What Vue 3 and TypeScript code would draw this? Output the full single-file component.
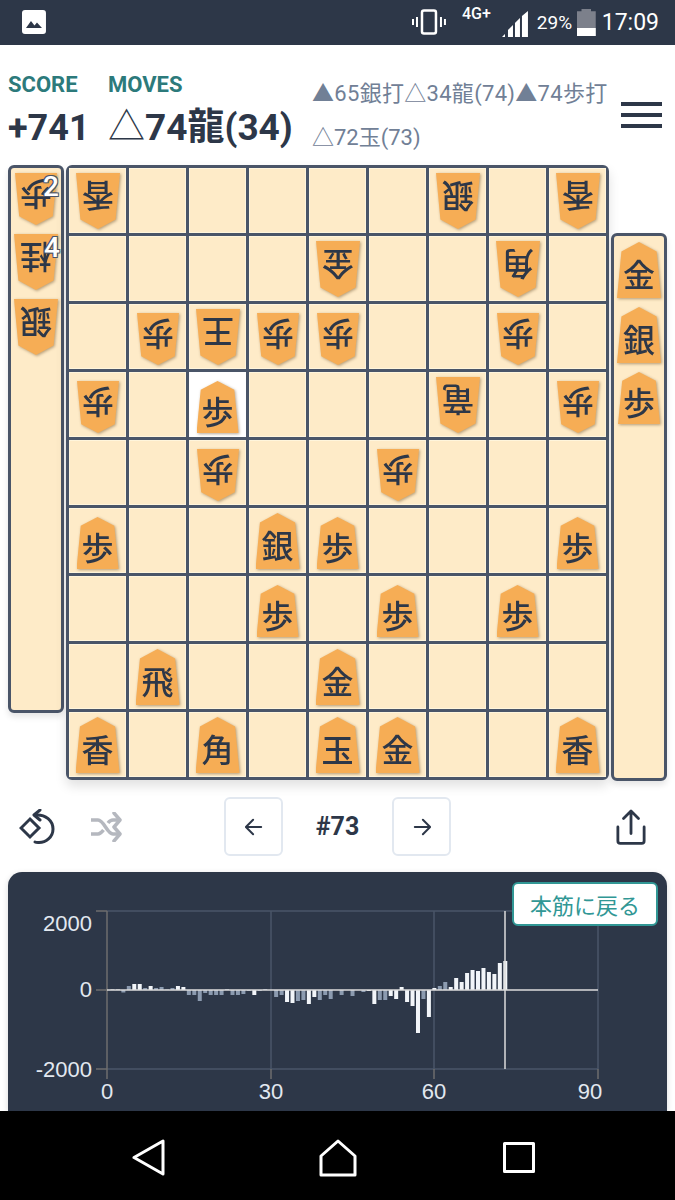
<template>
  <div class="page">
    <div class="status">
      <svg class="st-img" width="24" height="24" viewBox="0 0 24 24">
        <rect x="0" y="0" width="24" height="24" rx="3" fill="#fff" />
        <path d="M4 18l5-7 3.500 4.500 2.500-3 5 5.500z" fill="#2d3748" />
      </svg>
      <svg class="st-vib" width="34" height="26" viewBox="0 0 34 26">
        <rect x="10" y="1.500" width="14" height="23" rx="2" fill="none" stroke="#fff" stroke-width="2.500" />
        <path d="M5 8v10M1 10v6M29 8v10M33 10v6" stroke="#fff" stroke-width="2" />
      </svg>
      <span class="st-net">4G+</span>
      <svg class="st-sig" width="26" height="26" viewBox="0 0 26 26">
        <path d="M0 26l3-3v3zM6 26v-7l5-5v12zM13 26V12l5-5v19zM20 26V5l6-5v26z" fill="#fff" />
      </svg>
      <span class="st-pct">29%</span>
      <div class="st-bat"><i></i></div>
      <span class="st-time">17:09</span>
    </div>

    <header class="head">
      <div class="score">
        <div class="label">SCORE</div>
        <div class="big">+741</div>
      </div>
      <div class="moves">
        <div class="label">MOVES</div>
        <div class="big"><span class="tri">△</span>74龍(34)</div>
      </div>
      <div class="history">
        <div class="history-first">▲65銀打△34龍(74)▲74歩打</div>
        <div>△72玉(73)</div>
      </div>
      <div class="burger"><i></i><i></i><i></i></div>
    </header>

    <div class="table">
      <div class="stand stand-left">
        <div v-for="h in goteHand" :key="h.c" class="hand-piece">
          <div class="piece gote" :class="{ small: h.c === '歩' }"><div class="shape">{{ h.c }}</div></div>
          <span v-if="h.n" class="count">{{ h.n }}</span>
        </div>
      </div>
      <div class="board">
        <div v-for="(cell, i) in cells" :key="i" class="cell" :class="{ last: i === 29 }">
          <div v-if="cell" class="piece" :class="{ gote: cell.gote, small: cell.c === '歩' }">
            <div class="shape">{{ cell.c }}</div>
          </div>
        </div>
      </div>
      <div class="stand stand-right">
        <div v-for="h in senteHand" :key="h" class="hand-piece">
          <div class="piece" :class="{ small: h === '歩' }"><div class="shape">{{ h }}</div></div>
        </div>
      </div>
    </div>

    <div class="controls">
      <svg class="ic-flip" width="36" height="36" viewBox="0 0 36 36" fill="none" stroke="#2d3748" stroke-width="3">
        <path d="M11 10l9 9-9 9-9-9z" />
        <path d="M21 1l-6 5 6 5" stroke-linejoin="round" stroke-linecap="round" />
        <path d="M16 6c11-1 18 6 18 14 0 8-7 14-15 13.500-1 0-2 0-3-.5" stroke-linecap="round" />
      </svg>
      <svg class="ic-shuffle" width="32" height="30" viewBox="0 0 32 30" fill="none" stroke="#b5b8bf" stroke-width="3.500">
        <path d="M1 8h7c6 0 9 14 15 14h7M1 22h7c2 0 4-2 5.500-4M18 11c1.500-2 3-3 5-3h7" />
        <path d="M24 1l6 7-6 7M24 15l6 7-6 7" stroke-linejoin="round" stroke-linecap="round" />
      </svg>
      <button class="nav-btn" type="button">
        <svg width="18" height="18" viewBox="0 0 20 20" fill="none" stroke="#2d3748" stroke-width="2.200" stroke-linecap="round" stroke-linejoin="round">
          <path d="M18 10H2M9 2l-8 8 8 8" />
        </svg>
      </button>
      <div class="num">#73</div>
      <button class="nav-btn" type="button">
        <svg width="18" height="18" viewBox="0 0 20 20" fill="none" stroke="#2d3748" stroke-width="2.200" stroke-linecap="round" stroke-linejoin="round">
          <path d="M2 10h16M11 2l8 8-8 8" />
        </svg>
      </button>
      <svg class="ic-share" width="30" height="36" viewBox="0 0 32 38" fill="none" stroke="#2d3748" stroke-width="3" stroke-linecap="round" stroke-linejoin="round">
        <path d="M16 2v24M8 10l8-8 8 8" />
        <path d="M2 19v15c0 1.500 1 2.500 2.500 2.500h23c1.500 0 2.500-1 2.500-2.500V19" />
      </svg>
    </div>

    <section class="chart-panel">
      <svg class="chart" width="659" height="239" viewBox="0 0 659 239">
        <g stroke="#4a5568" stroke-width="1.500">
          <path d="M99 39H590M99 197H590M263 39V197M426 39V197M590 39V197" fill="none" />
        </g>
        <g stroke="#6e6e6e" stroke-width="1.500">
          <path d="M99 39V207M88 39H99M88 118H99M88 197H99M263 197V207M426 197V207M590 197V207" fill="none" />
        </g>
        <rect
          v-for="b in bars"
          :key="b.x"
          :x="b.x"
          :y="b.y"
          width="4"
          :height="b.h"
          :fill="b.fill"
        />
        <path d="M99 118H590M497 39V197" stroke="#dcdcdc" stroke-width="1.500" fill="none" />
        <g class="axis-text" text-anchor="end">
          <text x="84" y="59">2000</text>
          <text x="84" y="125">0</text>
          <text x="84" y="205">-2000</text>
        </g>
        <g class="axis-text" text-anchor="middle">
          <text x="99" y="227">0</text>
          <text x="263" y="227">30</text>
          <text x="426" y="227">60</text>
          <text x="582" y="227">90</text>
        </g>
      </svg>
      <button class="back-main" type="button">本筋に戻る</button>
    </section>

    <footer class="android">
      <svg width="33" height="37" viewBox="0 0 33 37" fill="none" stroke="#fff" stroke-width="3" stroke-linejoin="round">
        <path d="M2 18.500L31 2V35z" />
      </svg>
      <svg width="38" height="38" viewBox="0 0 38 38" fill="none" stroke="#fff" stroke-width="3" stroke-linejoin="round">
        <path d="M19 2L36 17V36H2V17z" />
      </svg>
      <svg class="nav-square" width="32" height="31" viewBox="0 0 32 31" fill="none" stroke="#fff" stroke-width="3" stroke-linejoin="round">
        <rect x="1.500" y="1.500" width="29" height="28" />
      </svg>
    </footer>
  </div>
</template>

<script setup lang="ts">
interface Cell {
  c: string;
  gote: boolean;
}

// "v" prefix = gote piece, "." = empty
const rows = [
  'v香 . . . . . v銀 . v香',
  '. . . . v金 . . v角 .',
  '. v歩 v王 v歩 v歩 . . v歩 .',
  'v歩 . 歩 . . . v竜 . v歩',
  '. . v歩 . . v歩 . . .',
  '歩 . . 銀 歩 . . . 歩',
  '. . . 歩 . 歩 . 歩 .',
  '. 飛 . . 金 . . . .',
  '香 . 角 . 玉 金 . . 香',
];

const cells: (Cell | null)[] = rows.flatMap((row) =>
  row.split(' ').map((t) => {
    if (t === '.') return null;
    return t[0] === 'v' ? { c: t.slice(1), gote: true } : { c: t, gote: false };
  }),
);

const goteHand = [
  { c: '歩', n: 2 },
  { c: '桂', n: 4 },
  { c: '銀', n: 0 },
];
const senteHand = ['金', '銀', '歩'];

// 評価値グラフ: 手数ごとの高さ(px)、true は白いバー
const evalPx: [number, boolean][] = [
  [0, true], [0.5, true], [0.5, true], [-2.5, false], [4, false], [6, true], [6, true], [2, false],
  [4, true], [2, false], [3, false], [0.5, false], [2, false], [4, true], [3, true], [-5, false],
  [-5, false], [-11, false], [-3, false], [-5, false], [-5, false], [-5, false], [1, false], [-5, false],
  [-5, false], [-4, false], [-1, false], [-5, true], [-1, false], [1, false], [0, false], [-7, false],
  [-5, false], [-12, true], [-13, true], [-11, false], [-10, false], [-14, true], [-7, true], [-10, false],
  [-5, false], [-9, false], [0, false], [-5, false], [0, false], [-6, false], [0, false], [-2, false],
  [-1, true], [-14, true], [-10, false], [-10, false], [-6, true], [-9, true], [3, true], [-12, true],
  [-16, true], [-43, true], [-9, false], [-27, true], [2, true], [4, false], [8, false], [3, true],
  [12, true], [8, true], [17, true], [20, true], [19, true], [22, true], [18, true], [16, true],
  [27, true], [29, true],
];

const bars = evalPx.map(([v, white], i) => ({
  x: 99 + 5.456 * i - 2,
  y: v > 0 ? 118 - v : 118,
  h: Math.abs(v),
  fill: white ? '#f2f5f9' : '#8c9bb0',
}));
</script>

<style scoped>
.page {
  width: 675px;
  height: 1200px;
  overflow: hidden;
  display: flex;
  flex-direction: column;
  font-family: Roboto, "Noto Sans CJK JP", sans-serif;
  color: #2d3748;
}

.status {
  height: 45px;
  flex: none;
  background: #2d3748;
  color: #fff;
  display: flex;
  align-items: center;
  padding: 0 16px 0 22px;
}
.st-img { margin-top: -2px; }
.st-vib { margin-left: 366px; margin-top: -1px; }
.st-net { margin-left: 16px; font-size: 16px; font-weight: 500; width: 34px; margin-top: -18px; }
.st-sig { margin-left: 6px; margin-top: 3px; }
.st-pct { margin-left: 9px; font-size: 19px; width: 40px; }
.st-bat {
  width: 19px;
  height: 27px;
  background: #7c808b;
  position: relative;
  clip-path: polygon(25% 0, 75% 0, 75% 8%, 100% 8%, 100% 100%, 0 100%, 0 8%, 25% 8%);
}
.st-bat i {
  position: absolute;
  left: 0;
  right: 0;
  bottom: 0;
  height: 8px;
  background: #fff;
}
.st-time { margin-left: 6px; font-size: 23px; }

.head {
  height: 120px;
  flex: none;
  display: flex;
  padding-left: 8px;
  box-sizing: border-box;
}
.score { width: 100px; padding-top: 27px; }
.moves { width: 204px; padding-top: 27px; }
.label {
  font-size: 22px;
  line-height: 26px;
  font-weight: 700;
  color: #2c7a7b;
}
.big {
  font-size: 36px;
  line-height: 46px;
  font-weight: 700;
  margin-top: 7px;
  white-space: nowrap;
}
.moves .big { font-size: 37px; }
.tri { font-weight: 400; }
.history {
  width: 300px;
  padding-top: 27px;
  font-size: 22px;
  line-height: 44px;
  color: #718096;
  white-space: nowrap;
}
.history-first { letter-spacing: 0.3px; }
.burger {
  margin-left: 9px;
  margin-top: 57px;
  width: 41px;
  display: flex;
  flex-direction: column;
  gap: 7px;
}
.burger i {
  height: 4px;
  background: #2d3748;
}

.table {
  flex: none;
  display: flex;
  align-items: flex-start;
  padding-left: 8px;
  gap: 2px;
}
.stand {
  width: 56px;
  box-sizing: border-box;
  height: 548px;
  border: 3px solid #4a5568;
  border-radius: 6px;
  background: #feebc8;
  display: flex;
  flex-direction: column;
  align-items: center;
  gap: 9px;
  padding-top: 5px;
  box-shadow: 0 4px 6px rgba(0, 0, 0, 0.1);
}
.stand-right { margin-top: 68px; padding-top: 6px; }
.hand-piece { position: relative; }
.count {
  position: absolute;
  top: 1px;
  right: -2px;
  font-size: 28px;
  line-height: 26px;
  font-weight: 500;
  color: #fff;
  text-shadow: 1px 1px 0 #4a5568, -1px -1px 0 #4a5568, 1px -1px 0 #4a5568, -1px 1px 0 #4a5568;
}

.board {
  width: 543px;
  box-sizing: border-box;
  border: 3px solid #4a5568;
  border-radius: 6px;
  background: #4a5568;
  display: grid;
  grid-template-columns: repeat(9, 57px);
  grid-auto-rows: 65px;
  gap: 3px;
  box-shadow: 0 6px 12px rgba(0, 0, 0, 0.12);
}
.cell {
  background: #feebc8;
  box-shadow: inset 0 0 0 1px #fff5dc;
  display: flex;
  align-items: flex-end;
  justify-content: center;
  padding-bottom: 4px;
  box-sizing: border-box;
}
.cell.last {
  background: #fff;
  box-shadow: none;
}

.piece {
  width: 44px;
  height: 56px;
  filter: drop-shadow(1.500px 1.500px 1.500px rgba(90, 60, 20, 0.45));
}
.piece.small {
  width: 42px;
  height: 52px;
}
.shape {
  width: 100%;
  height: 100%;
  background: #f6ad55;
  clip-path: polygon(50% 0, 90% 17%, 100% 100%, 0 100%, 10% 17%);
  display: flex;
  align-items: center;
  justify-content: center;
  padding-top: 6px;
  box-sizing: border-box;
  font-family: "Noto Sans CJK JP", sans-serif;
  font-size: 32px;
  font-weight: 500;
  line-height: 1;
  color: #2d3748;
}
.gote .shape { transform: rotate(180deg); }

.controls {
  flex: none;
  height: 91px;
  display: flex;
  align-items: center;
  padding-left: 19px;
  box-sizing: border-box;
}
.ic-shuffle { margin-left: 35px; }
.nav-btn {
  width: 59px;
  height: 59px;
  background: #fff;
  border: 2px solid #e2e8f0;
  border-radius: 6px;
  padding: 0;
  display: flex;
  align-items: center;
  justify-content: center;
}
.controls .nav-btn:nth-of-type(1) { margin-left: 102px; }
.num {
  width: 109px;
  text-align: center;
  font-size: 25px;
  font-weight: 700;
}
.ic-share { margin-left: 165px; }

.chart-panel {
  position: relative;
  margin: 0 8px;
  height: 239px;
  flex: none;
  background: #2d3748;
  border-radius: 14px 14px 0 0;
  box-shadow: 0 2px 6px rgba(0, 0, 0, 0.15);
}
.chart { display: block; }
.axis-text text {
  font-family: "Liberation Sans", Arial, sans-serif;
  font-size: 22px;
  fill: #e2e8f0;
}
.back-main {
  position: absolute;
  top: 10px;
  right: 9px;
  width: 146px;
  height: 44px;
  box-sizing: border-box;
  background: #fff;
  border: 2px solid #319795;
  border-radius: 6px;
  color: #319795;
  font-family: "Noto Sans CJK JP", sans-serif;
  font-size: 22px;
  padding: 0;
}

.android {
  flex: 1;
  background: #000;
  display: flex;
  align-items: center;
  justify-content: center;
  gap: 154px;
  position: relative;
  z-index: 1;
  padding: 4px 8px 0 0;
}
.nav-square { margin-left: -8px; }
</style>
